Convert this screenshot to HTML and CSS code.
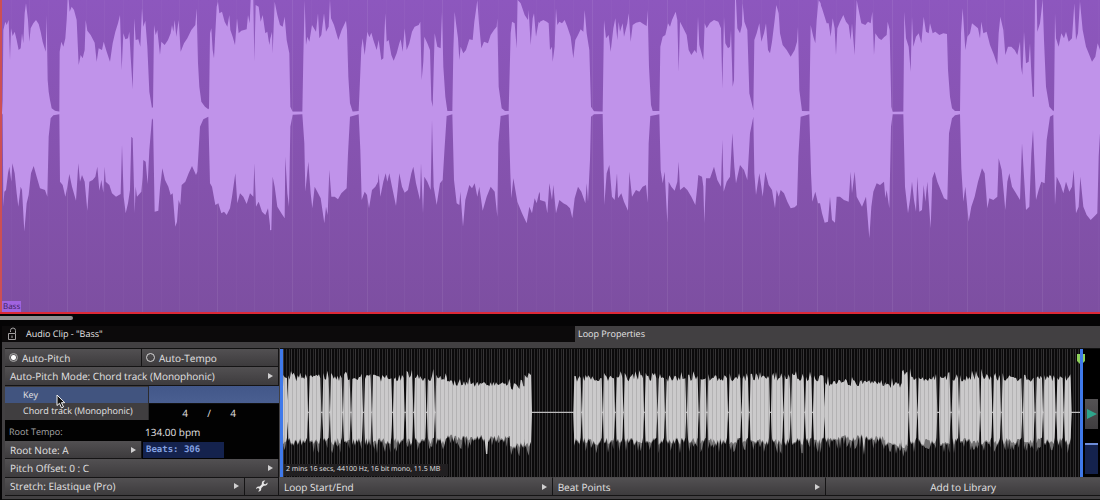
FILE: index.html
```html
<!DOCTYPE html>
<html lang="en">
<head>
  <meta charset="UTF-8" />
  <meta name="viewport" content="width=device-width, initial-scale=1.0"/>
  <title>Audio Clip - Bass</title>
  <link rel="stylesheet" href="styles.css">
</head>
<body>
  <section class="track">
    <svg class="track-wave" viewBox="0 0 3300 936" preserveAspectRatio="none" aria-hidden="true">
      <g>
        <polygon points="6,341 8,300 10,90 16,65 20,75 26,60 30,180 33,85 38,108 44,95 50,120 56,150 62,145 66,100 70,130 74,40 78,10 84,60 88,125 92,85 100,70 108,60 116,72 122,95 128,125 137,155 140,45 143,240 146,275 150,300 155,325 165,332 178,335 179,155 184,125 190,140 196,115 200,60 203,0 206,0 209,35 215,20 222,30 230,60 236,195 242,165 248,175 254,150 257,60 262,92 272,105 284,128 290,185 296,145 306,150 311,125 320,155 330,185 338,130 346,95 354,70 360,45 365,210 370,100 376,118 384,115 388,95 392,170 398,268 403,55 407,120 415,118 421,140 426,25 430,80 436,62 442,140 448,275 456,325 459,320 462,75 467,105 472,90 480,165 484,125 494,135 504,120 512,100 516,75 520,95 524,60 529,110 536,60 542,155 552,130 562,115 574,90 586,75 590,25 594,190 598,260 604,305 615,320 625,328 627,325 630,100 634,85 638,150 642,175 650,20 654,5 658,40 666,35 674,65 682,80 688,45 691,90 698,110 705,135 711,55 716,100 724,92 740,88 744,45 749,70 752,0 760,0 763,185 767,15 776,20 782,65 788,45 796,100 802,95 808,135 812,110 812,341"/>
        <polygon points="6,335 8,345 10,620 13,575 18,570 24,520 28,500 34,545 37,490 44,520 50,580 55,620 62,560 66,570 73,695 80,610 86,585 93,520 101,498 110,530 120,565 135,570 142,590 146,410 152,355 160,346 178,343 180,545 188,555 196,590 202,560 208,522 216,560 228,602 235,490 240,545 246,525 254,545 262,632 268,545 278,540 286,530 292,500 298,572 304,540 310,578 314,500 317,545 328,555 336,580 348,590 362,582 366,435 371,590 377,640 384,610 390,570 394,410 398,415 404,640 407,560 411,590 424,575 428,530 430,480 437,485 443,553 448,450 456,355 459,360 464,635 475,632 480,565 487,505 495,540 505,560 512,585 518,580 526,680 531,665 536,600 541,615 545,555 556,545 566,520 576,498 588,525 592,515 600,380 610,358 625,350 630,550 636,560 646,615 655,610 664,640 672,635 680,645 690,625 696,590 706,520 712,610 720,580 730,590 740,612 750,580 760,590 763,490 768,620 776,605 786,635 796,645 804,625 812,695 812,335"/>
      </g>
      <g transform="translate(810 0)">
        <polygon points="0,341 0,120 6,95 8,160 14,5 22,45 30,75 38,80 44,50 50,120 58,160 61,320 68,335 97,335 100,170 104,0 108,135 112,110 118,125 126,75 138,95 144,40 148,115 154,105 162,40 168,95 176,80 180,0 183,55 192,75 205,120 215,90 228,62 231,90 235,230 240,310 248,335 266,333 270,240 274,145 278,115 284,165 292,95 298,112 304,98 310,120 320,150 326,120 334,180 340,175 346,40 350,125 356,120 364,165 371,182 380,160 388,130 392,118 398,155 404,85 410,150 418,130 426,95 434,80 446,75 451,65 455,240 460,185 463,110 472,130 480,150 484,300 488,320 494,100 502,140 512,145 516,35 520,200 526,290 532,333 547,333 550,150 554,35 558,70 564,115 568,180 572,140 580,160 588,150 598,118 608,120 613,65 618,30 622,0 627,70 634,145 642,125 654,130 662,105 672,90 680,80 682,55 686,260 695,325 705,333 716,333 722,100 726,65 734,70 740,145 743,0 752,10 764,45 774,60 776,30 782,135 788,55 792,40 798,110 806,65 812,72 812,341"/>
        <polygon points="0,335 0,690 4,690 8,530 14,560 22,620 34,640 44,655 46,470 52,580 57,620 61,380 68,344 97,343 103,430 106,575 115,485 122,580 127,625 134,560 142,575 152,595 163,670 168,620 173,645 178,510 184,590 194,590 204,598 214,580 230,565 234,460 240,350 266,343 271,450 275,600 284,575 291,585 297,625 306,570 316,560 324,545 326,520 331,590 340,545 347,520 352,545 358,520 366,560 378,618 388,520 396,560 404,578 414,570 424,520 430,500 438,550 450,600 453,490 459,640 463,530 472,545 482,570 486,360 491,560 500,615 510,550 518,540 524,440 530,348 547,343 552,540 560,610 568,615 571,575 579,680 586,600 598,555 606,565 614,550 622,590 628,560 638,632 650,590 662,560 674,575 682,650 685,430 692,348 716,343 721,520 724,595 730,535 742,605 756,640 770,670 778,620 786,640 794,595 800,610 808,575 812,590 812,335"/>
      </g>
      <g transform="translate(1620 0)">
        <polygon points="0,341 0,65 10,60 20,65 26,70 30,150 36,140 38,185 44,140 48,25 52,75 58,65 66,70 74,60 82,80 92,110 100,175 106,120 114,105 122,88 130,95 134,30 140,100 148,150 153,320 162,334 188,335 192,60 198,115 206,105 212,155 220,85 226,55 232,120 236,65 240,95 248,70 252,110 262,70 266,40 272,125 278,75 288,68 300,65 310,72 320,78 323,30 327,200 333,315 338,333 358,333 361,140 368,110 376,105 384,70 390,80 396,60 407,35 412,60 416,215 420,65 430,85 440,105 446,150 454,165 464,150 470,160 474,50 478,135 490,180 494,70 500,85 510,68 522,60 535,65 543,85 547,265 552,50 556,130 564,145 570,140 573,90 578,260 582,240 585,0 588,0 592,85 600,100 606,75 608,10 613,65 622,90 628,280 640,330 643,120 650,100 658,70 664,125 672,100 678,70 684,150 690,160 696,125 704,60 709,15 716,40 720,100 728,135 740,150 752,170 764,150 771,125 774,80 778,270 786,333 808,334 812,75 820,110 826,130 830,60 836,0 842,10 842,341"/>
        <polygon points="0,335 0,600 16,605 22,640 28,550 36,600 40,555 48,640 58,600 70,610 80,615 90,625 97,655 104,595 114,560 124,575 136,610 140,550 144,605 150,480 153,350 162,343 188,342 193,615 200,520 208,495 216,590 224,600 231,520 234,595 244,580 252,605 264,632 268,515 276,590 288,570 298,575 308,560 318,555 323,608 326,430 331,348 358,343 362,510 368,550 374,515 382,668 386,545 394,560 404,572 412,545 416,485 420,570 432,560 442,570 454,590 466,615 472,560 475,525 486,530 490,560 493,670 498,535 510,535 522,500 532,540 543,560 547,420 551,575 560,545 570,530 577,400 583,500 588,550 600,495 612,510 622,540 630,400 640,350 643,520 648,585 658,520 664,560 668,590 676,515 686,555 696,570 705,625 710,570 716,590 722,570 732,580 742,605 752,625 764,622 771,615 775,470 782,350 808,343 813,520 817,605 826,575 834,610 842,610 842,335"/>
      </g>
      <g transform="translate(2460 0)">
        <polygon points="0,341 0,10 6,25 14,50 20,70 26,70 32,110 38,55 44,85 48,165 52,85 60,65 70,45 78,65 86,75 92,120 96,70 104,165 110,0 116,30 124,70 136,75 144,65 152,70 157,35 162,165 166,100 176,115 184,120 192,112 200,105 203,65 209,90 214,320 218,336 250,335 253,35 258,115 266,140 272,215 276,50 280,140 288,110 296,100 304,130 311,50 318,95 326,100 330,70 338,100 346,95 358,105 370,100 381,102 384,210 390,290 396,325 405,333 420,333 423,100 428,25 436,150 442,110 450,100 456,70 466,78 474,85 480,115 484,65 490,100 500,95 510,135 522,165 532,195 536,100 541,50 550,90 556,165 564,140 574,140 584,150 592,165 600,125 603,200 607,225 612,95 618,190 626,185 630,130 634,220 638,290 642,290 645,0 650,0 652,95 660,70 668,0 672,120 678,260 688,320 700,334 702,330 705,40 708,115 716,140 724,100 732,115 738,95 746,125 756,115 763,10 768,120 774,100 780,5 788,90 798,140 806,160 816,185 826,170 833,130 840,150 840,341"/>
        <polygon points="0,335 0,610 6,640 14,668 24,665 30,590 36,660 45,668 50,590 60,590 72,600 86,605 92,515 96,580 104,515 110,590 118,605 126,620 138,590 148,715 154,620 160,575 170,550 180,555 192,545 196,595 200,570 208,625 213,380 218,343 250,343 255,560 264,640 270,600 276,545 282,600 288,635 292,530 298,635 306,630 311,555 316,605 322,545 332,685 337,535 344,515 352,545 362,570 372,595 382,600 387,400 396,355 405,346 420,343 424,505 430,605 436,560 446,665 454,620 464,590 474,545 486,505 494,520 502,625 508,595 520,600 532,590 536,475 545,510 556,630 562,545 568,520 576,560 588,580 600,600 606,430 618,630 628,620 634,460 639,390 648,600 656,570 664,545 674,550 680,420 690,350 700,344 705,615 710,530 722,555 730,580 738,545 748,575 756,560 761,510 768,640 776,620 781,530 790,620 800,645 812,660 822,650 832,640 836,470 840,400 840,335"/>
      </g>
    </svg>
    <span class="track-name">Bass</span>
  </section>
  <div class="scrollbar"><div class="scrollbar-thumb"></div></div>

  <main class="panel">
    <header class="panel-head">
      <h1 class="panel-title">
        <svg class="lock" viewBox="0 0 10 14" aria-hidden="true">
          <path d="M3.500 5V3.500a2.500 2.500 0 0 1 5 0V6" />
          <path d="M1.500 6.500h7v6h-7z M5 8.500v2.500" />
        </svg>
        Audio Clip - "Bass"
      </h1>
      <h2 class="panel-tab">Loop Properties</h2>
    </header>

    <div class="panel-body">
      <form class="props">
        <div class="row halves">
          <label class="cell toggle"><input type="radio" name="auto" checked> Auto-Pitch</label>
          <label class="cell toggle"><input type="radio" name="auto"> Auto-Tempo</label>
        </div>
        <div class="row mode">
          <button type="button" class="cell arrow">Auto-Pitch Mode: Chord track (Monophonic)</button>
          <div class="menu" role="menu">
            <button type="button" class="menu-item active" role="menuitem">Key</button>
            <button type="button" class="menu-item" role="menuitem">Chord track (Monophonic)</button>
            <svg class="cursor" viewBox="0 0 10 15" aria-hidden="true">
              <path d="M1 1v10.500l2.500-2.200 2 4.600 2-.9-2-4.300h3.300z" />
            </svg>
          </div>
        </div>
        <div class="row selected"></div>
        <div class="row signature">
          <input type="text" value="4" aria-label="Beats per bar">
          <span>/</span>
          <input type="text" value="4" aria-label="Beat unit">
        </div>
        <div class="row halves">
          <label class="caption" for="tempo">Root Tempo:</label>
          <input class="tempo" type="text" id="tempo" value="134.00 bpm">
        </div>
        <div class="row halves">
          <button type="button" class="cell arrow">Root Note: A</button>
          <input class="beats" type="text" value="Beats: 306" aria-label="Beats">
        </div>
        <div class="row">
          <button type="button" class="cell arrow">Pitch Offset: 0 : C</button>
        </div>
        <div class="row stretch">
          <button type="button" class="cell arrow">Stretch: Elastique (Pro)</button>
          <button type="button" class="cell tool" aria-label="Settings">
            <svg viewBox="0 0 12 12" aria-hidden="true">
              <path d="M11.500 2.600 9.600 4.300 8 3.900 7.600 2.400 9.300.5C7.600 0 5.600 1.300 5.800 3.500c0 .5 0 .8-.4 1.200L3.900 6.200c-.4.3-.8.3-1.200.2C1.200 6.200 0 7.500.3 9.200L1.700 8l1.400.5.3 1.300-1.300 1.600c1.800.4 3.300-.9 3.100-2.500 0-.5 0-.8.4-1.200l1.600-1.500c.4-.4.800-.4 1.300-.4 2 .1 3.500-1.500 3-3.200z" />
            </svg>
          </button>
        </div>
      </form>

      <section class="loop">
        <div class="viewer">
          <div class="loop-wave">
            <svg id="loop-svg" viewBox="0 0 2391 384" preserveAspectRatio="none" aria-hidden="true">
              <defs>
                <pattern id="bars" width="12" height="10" patternUnits="userSpaceOnUse">
                  <rect width="12" height="10" fill="#cbcacb" />
                  <rect width="3" height="10" fill="#b4b3b4" />
                </pattern>
              </defs>
              <path class="centre-line" d="M0 190H2391" />
              <g transform="translate(-9 0)">
                <path id="loop-tails" fill="#747374" />
                <path id="loop-path" fill="url(#bars)" />
              </g>
            </svg>
            <span class="info">2 mins 16 secs, 44100 Hz, 16 bit mono, 11.5 MB</span>
            <svg class="marker" viewBox="0 0 8 10" aria-hidden="true">
              <path d="M0 0h8v7L5 10H3L0 7z" fill="#8fd25b" />
              <path d="M3 0h3v10H3z" fill="#3f79ea" />
            </svg>
          </div>
          <div class="side">
            <button type="button" class="play" aria-label="Play">
              <svg viewBox="0 0 10 10" aria-hidden="true"><path d="M0 0l10 5-10 5z" /></svg>
            </button>
            <div class="level"></div>
          </div>
        </div>
        <div class="actions">
          <button type="button" class="cell arrow">Loop Start/End</button>
          <button type="button" class="cell arrow">Beat Points</button>
          <button type="button" class="cell centred">Add to Library</button>
        </div>
      </section>
    </div>
  </main>

  <script src="script.js"></script>
</body>
</html>
```

FILE: styles.css
```css
* {
  box-sizing: border-box;
}
body {
  margin: 0;
  background: #050405;
  color: #e4e3e4;
  font-family: "Open Sans", "Noto Sans", sans-serif;
  font-size: 10px;
  line-height: 16px;
  text-rendering: geometricPrecision;
}
button, input {
  font: inherit;
  color: inherit;
  text-rendering: inherit;
  border: 0;
  margin: 0;
  padding: 0;
  min-width: 0;
}

/* Track */
.track {
  position: relative;
  height: 314px;
  border-bottom: 2px solid #dc2837;
  background:
    linear-gradient(#cc4f55, #cc4f55) 0 0 / 2px 100% no-repeat,
    linear-gradient(90deg, rgba(255,255,255,0.07) 1px, transparent 1px 19px, rgba(255,255,255,0.02) 19px 20px, transparent 20px 37px, rgba(255,255,255,0.03) 37px 38px, transparent 38px 56px, rgba(255,255,255,0.02) 56px 57px, transparent 57px) 67px 0 / 75px 100%,
    linear-gradient(#8d57be, #8452ac 60%, #7d4fa1);
}
.track-wave {
  display: block;
  width: 100%;
  height: 100%;
  fill: #c093ea;
}
.track-name {
  position: absolute;
  left: 2px;
  bottom: 0;
  padding: 0 1px;
  background: #a063df;
  color: #391c58;
  font-size: 8px;
  line-height: 11px;
}
.scrollbar {
  padding: 2px 0 6px;
}
.scrollbar-thumb {
  width: 73px;
  height: 4px;
  border-radius: 0 2px 2px 0;
  background: #918e90;
}

/* Panel */
.panel {
  margin-left: 2px;
  padding-bottom: 3px;
  background: #424042;
  border-bottom: 1px solid #111;
}
.panel-head {
  display: grid;
  grid-template-columns: 573px 1fr;
  margin-bottom: 6px;
}
.panel-title, .panel-tab {
  margin: 0;
  font-size: 9px;
  font-weight: normal;
  line-height: 16px;
}
.panel-title {
  display: flex;
  align-items: center;
  gap: 9px;
  padding-left: 5px;
  background: #0c0a0b;
}
.lock {
  width: 10px;
  height: 14px;
  fill: none;
  stroke: #a3a1a2;
}
.panel-tab {
  padding-left: 3px;
}
.panel-body {
  display: grid;
  grid-template-columns: 277px 1fr;
}

/* Properties */
.props {
  display: grid;
  grid-template-rows: repeat(8, 1fr);
  margin-left: 3px;
  border-top: 1px solid #111;
  background: #020202;
}
.row {
  display: grid;
  min-height: 18px;
}
.halves {
  grid-template-columns: 1fr 1fr;
}
.cell {
  display: flex;
  align-items: center;
  padding: 0 5px;
  background: linear-gradient(#525052, #3d3b3d);
  border-right: 1px solid #151415;
  border-bottom: 1px solid #151415;
  text-align: left;
  line-height: 16px;
}
.arrow {
  justify-content: space-between;
}
.arrow::after {
  content: "";
  border-left: 5px solid #d0cfd0;
  border-top: 3px solid transparent;
  border-bottom: 3px solid transparent;
}
.toggle {
  gap: 4px;
  padding-left: 4px;
}
.toggle input {
  appearance: none;
  width: 9px;
  height: 9px;
  border: 1px solid #d6d5d6;
  border-radius: 50%;
}
.toggle input:checked {
  border-color: #a5a4a5;
  background: radial-gradient(#fff 0 2px, #5c5a5c 3px);
}
.mode {
  position: relative;
}
.menu {
  position: absolute;
  z-index: 1;
  top: 100%;
  left: 0;
  width: 144px;
  padding: 1px 0;
  background: #403e40;
  border-right: 1px solid #2c2b2d;
}
.menu-item {
  display: block;
  width: 100%;
  padding-left: 18px;
  background: none;
  font-size: 9px;
  line-height: 16px;
  text-align: left;
}
.menu-item.active {
  background: #41547f;
}
.cursor {
  position: absolute;
  left: 51px;
  top: 8px;
  width: 10px;
  height: 15px;
  fill: #111;
  stroke: #f2f2f2;
}
.selected {
  background: linear-gradient(#425789, #4a5f91);
  border-bottom: 1px solid #111;
}
.signature {
  grid-template-columns: 20px 28px 20px;
  justify-content: end;
  align-items: center;
  padding-right: 36px;
  text-align: center;
}
.signature input {
  width: 100%;
  background: none;
  text-align: center;
}
.caption {
  padding-left: 4px;
  color: #a9a8a9;
  align-self: center;
  font-size: 9px;
}
.tempo {
  padding-left: 3px;
  background: none;
}
.beats {
  width: 81px;
  margin: 1px;
  padding-left: 3px;
  background: #14224d;
  color: #83a0e0;
  font-family: "DejaVu Sans Mono", monospace;
  font-size: 9px;
  font-weight: bold;
}
.stretch {
  grid-template-columns: 1fr 34px;
}
.tool {
  justify-content: center;
}
.tool svg {
  width: 12px;
  height: 12px;
  fill: #e6e5e6;
}

/* Loop view */
.loop {
  display: grid;
  grid-template-rows: 1fr 19px;
  min-width: 0;
}
.viewer {
  display: grid;
  grid-template-columns: 1fr 17px;
  margin-left: 1px;
  border-top: 1px solid #111;
  background: #000;
}
.loop-wave {
  position: relative;
  border-left: 3px solid #3f79ea;
  border-right: 3px solid #3f79ea;
  background: linear-gradient(90deg, #373537 1px, #0b0a0b 1px 3px, #2a292a 3px 4px, #0b0a0b 4px 6px, #2a292a 6px 7px, #0b0a0b 7px) 0 0 / 8px 100%;
}
#loop-svg {
  display: block;
  width: 100%;
  height: 128px;
}
.centre-line {
  stroke: #bdbcbd;
  stroke-width: 4;
}
.info {
  position: absolute;
  left: 1px;
  bottom: 1px;
  padding: 0 8px 0 2px;
  background: #211f21;
  font-size: 7px;
  line-height: 12px;
}
.marker {
  position: absolute;
  right: -5px;
  top: 5px;
  width: 8px;
  height: 10px;
}
.side {
  display: flex;
  flex-direction: column;
  gap: 14px;
  padding: 50px 2px 3px;
}
.play {
  display: grid;
  place-items: center;
  height: 30px;
  background: linear-gradient(#545254, #3f3d3f);
}
.play svg {
  width: 10px;
  height: 10px;
  fill: #2ea58c;
}
.level {
  flex: 1;
  background: #14224d;
  border-top: 2px solid #6d8cd8;
}
.actions {
  display: grid;
  grid-template-columns: repeat(3, 1fr);
}
.actions .cell {
  border-top: 1px solid #4c4a4c;
}
.actions .centred {
  justify-content: center;
  border-right: 0;
}
```

FILE: script.js
```js
// Phrases of the loop: start, end, top and bottom of the envelope
const phrases = [
  [10,20],[25,80],[89,120],[130,145],[153,184],[192,208],[217,245],[255,271],
  [279,333],[342,370],[380,396],[405,435],[444,461],[469,500],
  [500,690,104,256],[690,732,112,278],[734,752,78,278],
  [883,901],[909,964],[972,1001],[1010,1026],[1034,1088],[1097,1128],[1136,1151],
  [1160,1215],[1224,1252],[1262,1276],[1285,1340],[1349,1380],[1388,1403],
  [1412,1466],[1476,1506],[1514,1528],[1536,1570],[1578,1593],[1602,1630],
  [1636,1816,102,256],[1816,1864,108,278],[1866,1882,82,278],
  [1890,1908],[1916,1968],[1980,2008],[2018,2033],[2040,2096],[2104,2133],
  [2142,2159],[2168,2223],[2232,2260],[2270,2285],[2293,2323],[2332,2347],[2355,2371]
];
const centre = 190;
let seed = 7;
function rnd() {
  seed = (seed * 16807) % 2147483647;
  return seed / 2147483647;
}

let wave = '';
let tails = '';
for (const [x0, x1, top = 88, bottom = 266] of phrases) {
  const up = [];
  const down = [];
  const tail = [];
  for (let x = x0; x <= x1; x += 4) {
    const edge = x === x0 || x + 4 > x1;
    const spike = rnd() > 0.85 ? 14 : 0;
    const y = Math.round(bottom + rnd() * 22);
    up.push(`${x},${Math.round(top + (rnd() - 0.5) * 20 - spike - (edge ? 6 : 0))}`);
    down.unshift(`${x},${y}`);
    tail.unshift(`${x},${y + (rnd() > 0.75 ? 26 : 4)}`);
  }
  up.push(`${x1 + 1},${top}`);
  down.unshift(`${x1 + 1},${bottom}`);
  wave += `M${x0 - 3},${centre} L${up.join(' ')} L${x1 + 4},${centre} L${down.join(' ')}Z `;
  tails += `M${x0 - 3},${centre} L${x1 + 3},${centre} L${tail.join(' ')}Z `;
}
// Two single downward peaks
wave += 'M612,250 L626,250 L622,315 L618,315Z M1746,250 L1757,250 L1752,318Z';
document.getElementById('loop-path').setAttribute('d', wave);
document.getElementById('loop-tails').setAttribute('d', tails);
```
